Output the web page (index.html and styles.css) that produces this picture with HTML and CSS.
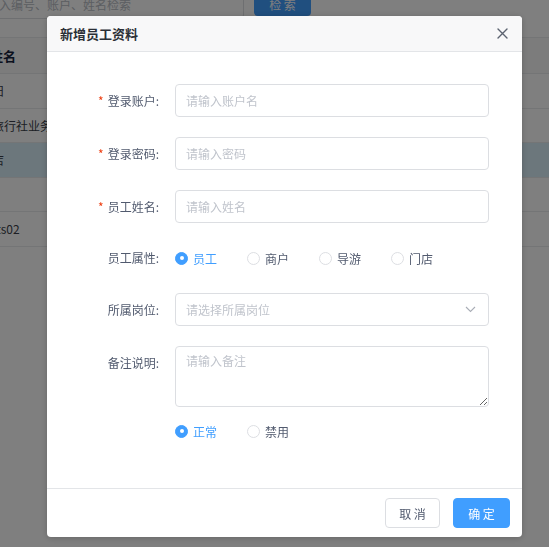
FILE: index.html
```html
<!DOCTYPE html>
<html lang="zh-CN">
<head>
<meta charset="utf-8">
<title>新增员工资料</title>
<link rel="stylesheet" href="styles.css">
</head>
<body>
<div class="page">
  <div class="toolbar">
    <div class="search">请输入编号、账户、姓名检索</div>
    <button class="search-btn" type="button">检 索</button>
  </div>
  <div class="list">
    <div class="list-row head"><span class="cell">姓名</span></div>
    <div class="list-row"><span class="cell">旧</span></div>
    <div class="list-row"><span class="cell">旅行社业务</span></div>
    <div class="list-row active"><span class="cell">店</span></div>
    <div class="list-row"><span class="cell"></span></div>
    <div class="list-row"><span class="cell">tts02</span></div>
  </div>
</div>

<div class="mask"></div>

<div class="modal">
  <div class="modal-header">
    <span class="modal-title">新增员工资料</span>
    <button class="modal-close" type="button" aria-label="关闭">
      <svg width="11" height="11" viewBox="0 0 11 11"><path d="M1 1 L10 10 M10 1 L1 10" stroke="#5c6370" stroke-width="1.4" fill="none" stroke-linecap="round"/></svg>
    </button>
  </div>
  <div class="modal-body">
    <div class="form-row">
      <label class="form-label required">登录账户:</label>
      <div class="form-control"><input class="input" type="text" placeholder="请输入账户名"></div>
    </div>
    <div class="form-row">
      <label class="form-label required">登录密码:</label>
      <div class="form-control"><input class="input" type="text" placeholder="请输入密码"></div>
    </div>
    <div class="form-row">
      <label class="form-label required">员工姓名:</label>
      <div class="form-control"><input class="input" type="text" placeholder="请输入姓名"></div>
    </div>
    <div class="form-row">
      <label class="form-label short">员工属性:</label>
      <div class="form-control radios">
        <span class="radio checked"><span class="dot"></span><span class="radio-text">员工</span></span>
        <span class="radio"><span class="dot"></span><span class="radio-text">商户</span></span>
        <span class="radio"><span class="dot"></span><span class="radio-text">导游</span></span>
        <span class="radio"><span class="dot"></span><span class="radio-text">门店</span></span>
      </div>
    </div>
    <div class="form-row">
      <label class="form-label">所属岗位:</label>
      <div class="form-control">
        <div class="select">
          <span class="select-placeholder">请选择所属岗位</span>
          <svg class="chevron" width="11" height="7" viewBox="0 0 11 7"><path d="M1 1 L5.5 5.5 L10 1" stroke="#a9adb6" stroke-width="1.1" fill="none"/></svg>
        </div>
      </div>
    </div>
    <div class="form-row tight">
      <label class="form-label">备注说明:</label>
      <div class="form-control"><textarea class="textarea" placeholder="请输入备注"></textarea></div>
    </div>
    <div class="form-row">
      <label class="form-label short"></label>
      <div class="form-control radios">
        <span class="radio checked"><span class="dot"></span><span class="radio-text">正常</span></span>
        <span class="radio"><span class="dot"></span><span class="radio-text">禁用</span></span>
      </div>
    </div>
  </div>
  <div class="modal-footer">
    <button class="btn cancel" type="button">取 消</button>
    <button class="btn primary" type="button">确 定</button>
  </div>
</div>
</body>
</html>
```

FILE: styles.css
```css
* { box-sizing: border-box; }

html, body {
  margin: 0;
  padding: 0;
  background: #fff;
  font-family: "Noto Sans CJK SC", "Noto Sans", sans-serif;
  font-size: 12px;
  color: #515a6e;
  overflow: hidden;
  height: 100%;
}

/* underlying page */
.page {
  margin-left: -36px;
  margin-top: -13px;
}

.toolbar {
  display: flex;
  align-items: flex-start;
  gap: 10px;
}

.search {
  width: 280px;
  height: 32px;
  border: 1px solid #dcdee2;
  border-radius: 4px;
  padding: 0 10px;
  line-height: 34px;
  color: #b8bcc4;
  white-space: nowrap;
  overflow: hidden;
}

.search-btn {
  width: 57px;
  height: 29px;
  border: 0;
  border-radius: 4px;
  background: #409eff;
  color: #fff;
  font-family: inherit;
  font-size: 12px;
  padding-top: 6px;
}

.list {
  margin-top: 18px;
  border-top: 1px solid #e8eaec;
  width: 700px;
}

.list-row {
  height: 34.5px;
  border-bottom: 1px solid #e8eaec;
  display: flex;
  align-items: center;
  padding-left: 28px;
  color: #3a3f4a;
  font-size: 12px;
}

.list-row.head {
  height: 36px;
  font-weight: bold;
  background: #f8f8f9;
  font-size: 13px;
  color: #17233d;
  padding-left: 26px;
}

.list-row.active {
  background: #d9eef9;
}

/* overlay */
.mask {
  position: fixed;
  inset: 0;
  background: rgba(0, 0, 0, 0.5);
}

.modal {
  position: fixed;
  top: 16px;
  left: 47px;
  width: 475px;
  height: 521px;
  background: #fff;
  border-radius: 4px;
  box-shadow: 0 1px 6px rgba(0, 0, 0, 0.2);
  display: flex;
  flex-direction: column;
  overflow: hidden;
}

.modal-header {
  height: 36px;
  flex: none;
  background: #f8f8f9;
  border-bottom: 1px solid #e3e5e8;
  display: flex;
  align-items: center;
  justify-content: space-between;
  padding: 0 13px 0 13px;
}

.modal-title {
  font-size: 13px;
  font-weight: bold;
  color: #2b2f36;
}

.modal-close {
  border: 0;
  background: none;
  padding: 0;
  width: 14px;
  height: 14px;
  display: flex;
  align-items: center;
  justify-content: center;
}

.modal-body {
  flex: 1;
  padding-top: 32px;
}

.form-row {
  display: flex;
  align-items: flex-start;
  margin-bottom: 20px;
}

.form-row.tight {
  margin-bottom: 9px;
}

.form-label {
  width: 128px;
  flex: none;
  text-align: right;
  padding-right: 16px;
  line-height: 33px;
  color: #515a6e;
  font-size: 12px;
}

.form-label.short {
  line-height: 30px;
}

.form-label.required::before {
  content: "*";
  color: #ed4014;
  margin-right: 4px;
}

.form-control {
  width: 314px;
}

.input,
.select,
.textarea {
  width: 314px;
  border: 1px solid #dcdee2;
  border-radius: 4px;
  background: #fff;
  font-family: inherit;
  font-size: 12px;
  color: #515a6e;
}

.input {
  height: 33px;
  padding: 0 10px;
  outline: none;
}

.input::placeholder,
.textarea::placeholder {
  color: #c0c4cc;
}

.select {
  height: 33px;
  padding: 0 12px 0 10px;
  display: flex;
  align-items: center;
  justify-content: space-between;
}

.select-placeholder {
  color: #c0c4cc;
}

.textarea {
  display: block;
  height: 61px;
  padding: 5px 10px;
  line-height: 18px;
  resize: vertical;
  outline: none;
}

.radios {
  height: 30px;
  display: flex;
  align-items: center;
}

.radio {
  width: 72px;
  display: flex;
  align-items: center;
  gap: 5px;
  color: #515a6e;
}

.radio .dot {
  width: 13px;
  height: 13px;
  border-radius: 50%;
  border: 1px solid #dcdee2;
  background: #fff;
  position: relative;
  flex: none;
}

.radio.checked .dot {
  border-color: #409eff;
  background: #409eff;
}

.radio.checked .dot::after {
  content: "";
  position: absolute;
  width: 4px;
  height: 4px;
  border-radius: 50%;
  background: #fff;
  left: 50%;
  top: 50%;
  transform: translate(-50%, -50%);
}

.radio.checked .radio-text {
  color: #409eff;
}

.modal-footer {
  flex: none;
  height: 49px;
  border-top: 1px solid #e3e5e8;
  display: flex;
  justify-content: flex-end;
  align-items: flex-start;
  gap: 13px;
  padding: 9px 12px 0 0;
}

.btn {
  width: 57px;
  height: 30px;
  border: 1px solid #dcdee2;
  border-radius: 4px;
  background: #fff;
  color: #515a6e;
  font-family: inherit;
  font-size: 12px;
  padding: 0;
}

.btn.cancel {
  width: 55px;
}

.btn.primary {
  background: #409eff;
  border-color: #409eff;
  color: #fff;
}
```
